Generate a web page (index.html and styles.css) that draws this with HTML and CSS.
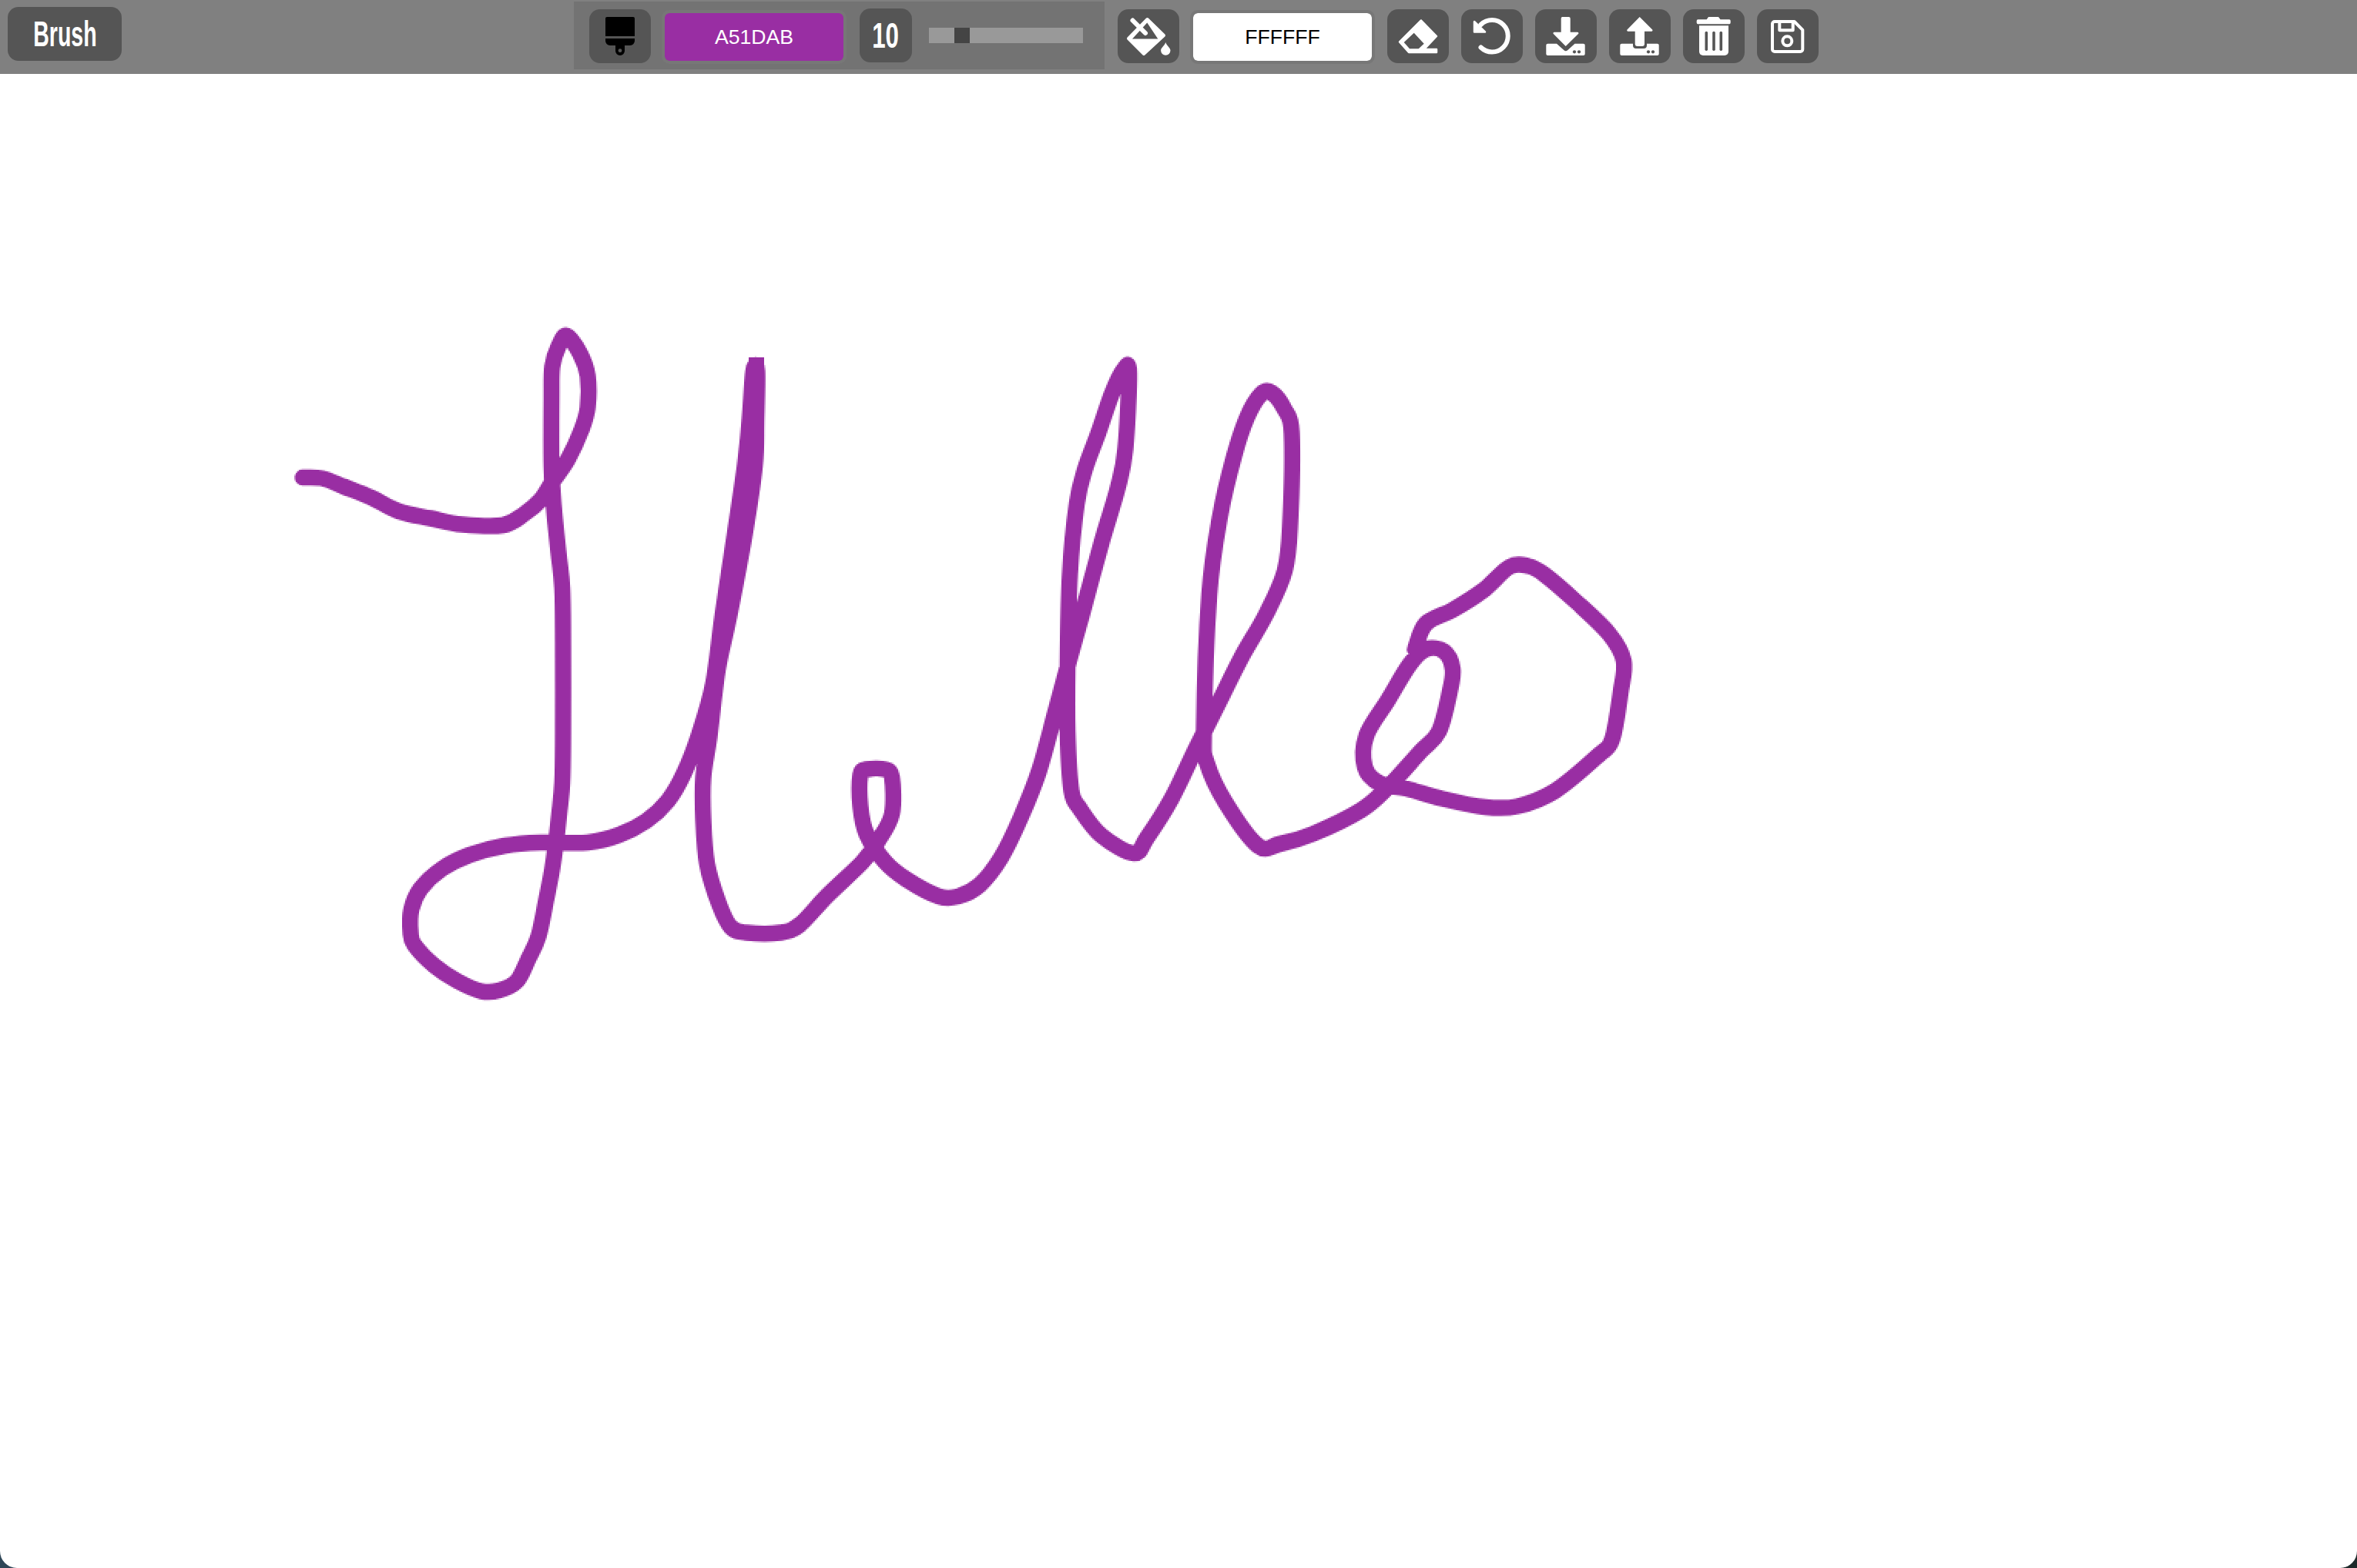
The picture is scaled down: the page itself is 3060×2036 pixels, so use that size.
FILE: index.html
```html
<!DOCTYPE html>
<html lang="en">

<head>
    <meta charset="UTF-8">
    <meta name="viewport" content="width=device-width, initial-scale=1.0">
    <title>Paint App</title>
    <link rel="stylesheet" href="styles.css">
</head>

<body>
    <div class="app">
        <!-- Toolbar -->
        <div class="toolbar">
            <div class="tool-name"><span class="narrow">Brush</span></div>

            <div class="brush-group">
                <div class="icon-btn">
                    <svg viewBox="0 0 80 70">
                        <path class="black" d="M23 10H57a2 2 0 0 1 2 2V35H21V12a2 2 0 0 1 2-2z" />
                        <path class="black" d="M21 38H59V41a6 6 0 0 1-6 6H46V54a6 6 0 0 1-12 0V47H27a6 6 0 0 1-6-6z" />
                        <circle class="hole" cx="40" cy="53.7" r="2.4" />
                    </svg>
                </div>
                <div class="color-field purple">A51DAB</div>
                <div class="size-value"><span class="narrow">10</span></div>
                <div class="slider">
                    <div class="slider-thumb"></div>
                </div>
            </div>

            <div class="icon-btn bucket">
                <svg viewBox="0 0 80 70">
                    <path class="white line-round" d="M38.5 13L60 34L34 58L14 38z" />
                    <path class="hole" d="M19 38.5L38.3 17.5L52.3 38.5z" />
                    <path class="line" d="M19.5 14.5L36 31" />
                    <path class="white" d="M62.3 43C64 48 68.5 50 68.5 53.5a6.2 6.2 0 0 1-12.4 0C56.1 50 60.6 48 62.3 43z" />
                </svg>
            </div>
            <div class="color-field">FFFFFF</div>
            <div class="icon-btn eraser">
                <svg viewBox="0 0 80 70">
                    <path class="white line-thin" d="M44 14.5L64 35L48 52H64V56H28L16 42.5z" />
                    <path class="hole" d="M34.7 30.7L47.7 44.7L40.7 51.3H29L21.7 43z" />
                </svg>
            </div>
            <div class="icon-btn">
                <svg viewBox="0 0 80 70">
                    <path class="line" d="M25.5 20A20.7 20.7 0 1 1 25.5 49.5" />
                    <path class="white line-thin" d="M17 16V29.5H31z" />
                </svg>
            </div>
            <div class="icon-btn">
                <svg viewBox="0 0 80 70">
                    <path class="white" d="M36 10H43.7a2 2 0 0 1 2 2V29.7H55a1.4 1.4 0 0 1 1 2.3L39.7 48L23.8 32a1.4 1.4 0 0 1 1-2.3H33.7V12a2 2 0 0 1 2.3-2z" />
                    <path class="white" d="M16.3 44.7H28L37.5 53.2a3.4 3.4 0 0 0 4.6 0L51.5 44.7H62.7a2 2 0 0 1 2 2V58a2 2 0 0 1-2 2H16.3a2 2 0 0 1-2-2V46.7a2 2 0 0 1 2-2z" />
                    <circle class="hole" cx="51" cy="55.3" r="2.1" />
                    <circle class="hole" cx="57" cy="55.3" r="2.1" />
                </svg>
            </div>
            <div class="icon-btn">
                <svg viewBox="0 0 80 70">
                    <path class="white" d="M39.7 10L56.2 26.6a1.3 1.3 0 0 1-1 2.1H46V45a3 3 0 0 1-3 3H36.7a3 3 0 0 1-3-3V28.7H24.5a1.3 1.3 0 0 1-1-2.1z" />
                    <path class="white" d="M16.3 44.7H31V47a4 4 0 0 0 4 4H45a4 4 0 0 0 4-4V44.7H62.7a2 2 0 0 1 2 2V58a2 2 0 0 1-2 2H16.3a2 2 0 0 1-2-2V46.7a2 2 0 0 1 2-2z" />
                    <circle class="hole" cx="51" cy="55.3" r="2.1" />
                    <circle class="hole" cx="57" cy="55.3" r="2.1" />
                </svg>
            </div>
            <div class="icon-btn">
                <svg viewBox="0 0 80 70">
                    <path class="white" d="M33 10H46L48.5 13.3H60a1.7 1.7 0 0 1 1.7 1.7V17.6a1.7 1.7 0 0 1-1.7 1.7H19.4a1.7 1.7 0 0 1-1.7-1.7V15a1.7 1.7 0 0 1 1.7-1.7H30.7z" />
                    <path class="white" d="M21 21.3H59V55a5 5 0 0 1-5 5H26a5 5 0 0 1-5-5z" />
                    <rect class="hole" x="28.5" y="28.7" width="3.6" height="25.3" rx="1.8" />
                    <rect class="hole" x="38.2" y="28.7" width="3.6" height="25.3" rx="1.8" />
                    <rect class="hole" x="47.5" y="28.7" width="3.6" height="25.3" rx="1.8" />
                </svg>
            </div>
            <div class="icon-btn">
                <svg viewBox="0 0 80 70">
                    <path class="outline" d="M23 16H48.5L59.3 26.8V52a3 3 0 0 1-3 3H23a3 3 0 0 1-3-3V19a3 3 0 0 1 3-3z" />
                    <path class="outline" d="M29.3 16V27.3H46.7V16" />
                    <circle class="outline" cx="39.3" cy="41.3" r="6" />
                </svg>
            </div>
        </div>

        <!-- Canvas -->
        <canvas id="drawing" class="drawing" width="1530" height="970"></canvas>
    </div>
    <script src="script.js"></script>
</body>

</html>
```

FILE: styles.css
```css
body {
    margin: 0;
    height: 100vh;
    background: linear-gradient(90deg, #2e4657, #1d2a2a);
    font-family: "Liberation Sans", Arial, sans-serif;
}

.app {
    display: flex;
    flex-direction: column;
    height: 100%;
    background-color: #fff;
    border-radius: 0 0 22px 22px;
    overflow: hidden;
}

.toolbar {
    display: flex;
    align-items: flex-start;
    height: 96px;
    flex-shrink: 0;
    background-color: #808080;
}

.tool-name {
    display: flex;
    justify-content: center;
    align-items: center;
    width: 148px;
    height: 70px;
    margin: 9px 587px 0 10px;
    background-color: #555;
    border-radius: 14px;
}

.narrow {
    display: inline-block;
    color: #fff;
    font-size: 46px;
    font-weight: bold;
    line-height: 70px;
    transform: scaleX(0.62);
}

.brush-group {
    display: flex;
    align-items: flex-start;
    height: 88px;
    margin: 2px 17px 0 0;
    padding: 0 28px 0 20px;
    background-color: #737373;
}

.brush-group .icon-btn {
    margin: 10px 14px 0 0;
}

.icon-btn {
    width: 80px;
    height: 70px;
    margin: 12px 16px 0 0;
    flex-shrink: 0;
    background-color: #555;
    border-radius: 14px;
}

.icon-btn.bucket {
    margin-right: 14px;
}

.icon-btn.eraser {
    margin-left: 16px;
}

.icon-btn svg {
    display: block;
    width: 80px;
    height: 70px;
}

.color-field {
    width: 232px;
    height: 62px;
    margin-top: 13px;
    border: 4px solid #777;
    border-radius: 10px;
    background-color: #fff;
    background-clip: padding-box;
    color: #000;
    font-size: 26.67px;
    line-height: 62px;
    text-align: center;
}

.brush-group .color-field {
    margin-top: 11px;
}

.color-field.purple {
    background-color: #992ea3;
    color: #fff;
}

.size-value {
    width: 68px;
    height: 70px;
    margin: 9px 22px 0 17px;
    background-color: #555;
    border-radius: 14px;
    text-align: center;
}

.size-value .narrow {
    transform: scaleX(0.68);
}

.slider {
    width: 200px;
    height: 20px;
    margin-top: 34px;
    background-color: #999;
}

.slider-thumb {
    width: 20px;
    height: 20px;
    margin-left: 33px;
    background-color: #444;
}

.drawing {
    display: block;
    width: 3060px;
    height: 1940px;
    image-rendering: pixelated;
}

.white {
    fill: #fff;
}

.black {
    fill: #000;
}

.hole {
    fill: #555;
}

.line {
    fill: none;
    stroke: #fff;
    stroke-width: 6;
    stroke-linecap: round;
}

.line-round {
    stroke: #fff;
    stroke-width: 4;
    stroke-linejoin: round;
}

.line-thin {
    stroke: #fff;
    stroke-width: 2.5;
    stroke-linejoin: round;
}

.outline {
    fill: none;
    stroke: #fff;
    stroke-width: 4;
    stroke-linejoin: round;
}
```

FILE: script.js
```js
// the saved brush stroke, in page pixels (the canvas is half size and shown at 2x)
const stroke = [
    [393, 620], [418, 621], [447, 632], [482, 646], [518, 664], [559, 673], [600, 681], [653, 682],
    [681, 667], [702, 649], [717, 626], [737, 597], [755, 558], [763, 529], [763, 488], [753, 459],
    [736, 436], [725, 450], [717, 476], [716, 517], [716, 605], [719, 658], [725, 717], [730, 764],
    [731, 834], [731, 958], [730, 1016], [726, 1057], [722, 1092], [717, 1128], [709, 1169], [699, 1216],
    [686, 1245], [671, 1274], [648, 1286], [625, 1287], [594, 1274], [564, 1254], [538, 1227], [533, 1210],
    [534, 1181], [546, 1154], [574, 1128], [610, 1110], [656, 1098], [702, 1094], [763, 1094], [804, 1084],
    [839, 1066], [867, 1040], [888, 1004], [908, 952], [926, 887], [938, 799], [954, 693], [967, 605],
    [973, 547], [978, 482], [983, 482], [982, 547], [980, 605], [967, 693], [947, 799], [932, 869],
    [921, 957], [913, 1010], [913, 1063], [918, 1122], [934, 1175], [949, 1204], [969, 1211], [1013, 1211],
    [1038, 1201], [1074, 1163], [1120, 1119], [1140, 1092], [1158, 1057], [1158, 1009], [1149, 999], [1125, 999],
    [1117, 1006], [1117, 1047], [1125, 1083], [1149, 1119], [1177, 1142], [1219, 1164], [1244, 1164], [1272, 1149],
    [1300, 1113], [1325, 1062], [1349, 1001], [1370, 925], [1388, 858], [1405, 797], [1430, 705], [1451, 634],
    [1461, 583], [1466, 484], [1459, 480], [1444, 510], [1426, 562], [1409, 608], [1398, 654], [1389, 746],
    [1386, 863], [1386, 950], [1391, 1027], [1402, 1050], [1430, 1085], [1472, 1108], [1489, 1088], [1521, 1037],
    [1553, 971], [1584, 909], [1612, 853], [1644, 797], [1668, 741], [1675, 680], [1677, 562], [1668, 532],
    [1651, 510], [1637, 512], [1619, 542], [1602, 593], [1584, 670], [1570, 772], [1563, 950], [1567, 991],
    [1591, 1042], [1633, 1098], [1661, 1096], [1704, 1083], [1767, 1052], [1802, 1022], [1844, 976], [1868, 950],
    [1882, 899], [1886, 869], [1875, 846], [1851, 843], [1830, 863], [1802, 909], [1774, 955], [1772, 996],
    [1791, 1017], [1826, 1024], [1872, 1037], [1928, 1048], [1970, 1047], [2019, 1027], [2075, 981], [2093, 960],
    [2104, 899], [2108, 858], [2089, 823], [2047, 782], [2005, 746], [1984, 735], [1960, 736], [1925, 767],
    [1886, 792], [1851, 810], [1837, 843]
];

const canvas = document.getElementById('drawing');
const ctx = canvas.getContext('2d');
const pts = stroke.map(p => [p[0] / 2, (p[1] - 96) / 2]);

ctx.strokeStyle = '#992ea3';
ctx.fillStyle = '#992ea3';
ctx.lineWidth = 10.5;
ctx.lineJoin = 'round';
ctx.lineCap = 'round';

// catmull-rom through all the points
ctx.beginPath();
ctx.moveTo(pts[0][0], pts[0][1]);
for (let i = 0; i < pts.length - 1; i++) {
    const a = pts[Math.max(i - 1, 0)];
    const b = pts[i];
    const c = pts[i + 1];
    const d = pts[Math.min(i + 2, pts.length - 1)];
    ctx.bezierCurveTo(
        b[0] + (c[0] - a[0]) / 6, b[1] + (c[1] - a[1]) / 6,
        c[0] - (d[0] - b[0]) / 6, c[1] - (d[1] - b[1]) / 6,
        c[0], c[1]
    );
}
ctx.stroke();

// flat top of the second letter stroke
ctx.fillRect(486, 184, 10, 10);
```
